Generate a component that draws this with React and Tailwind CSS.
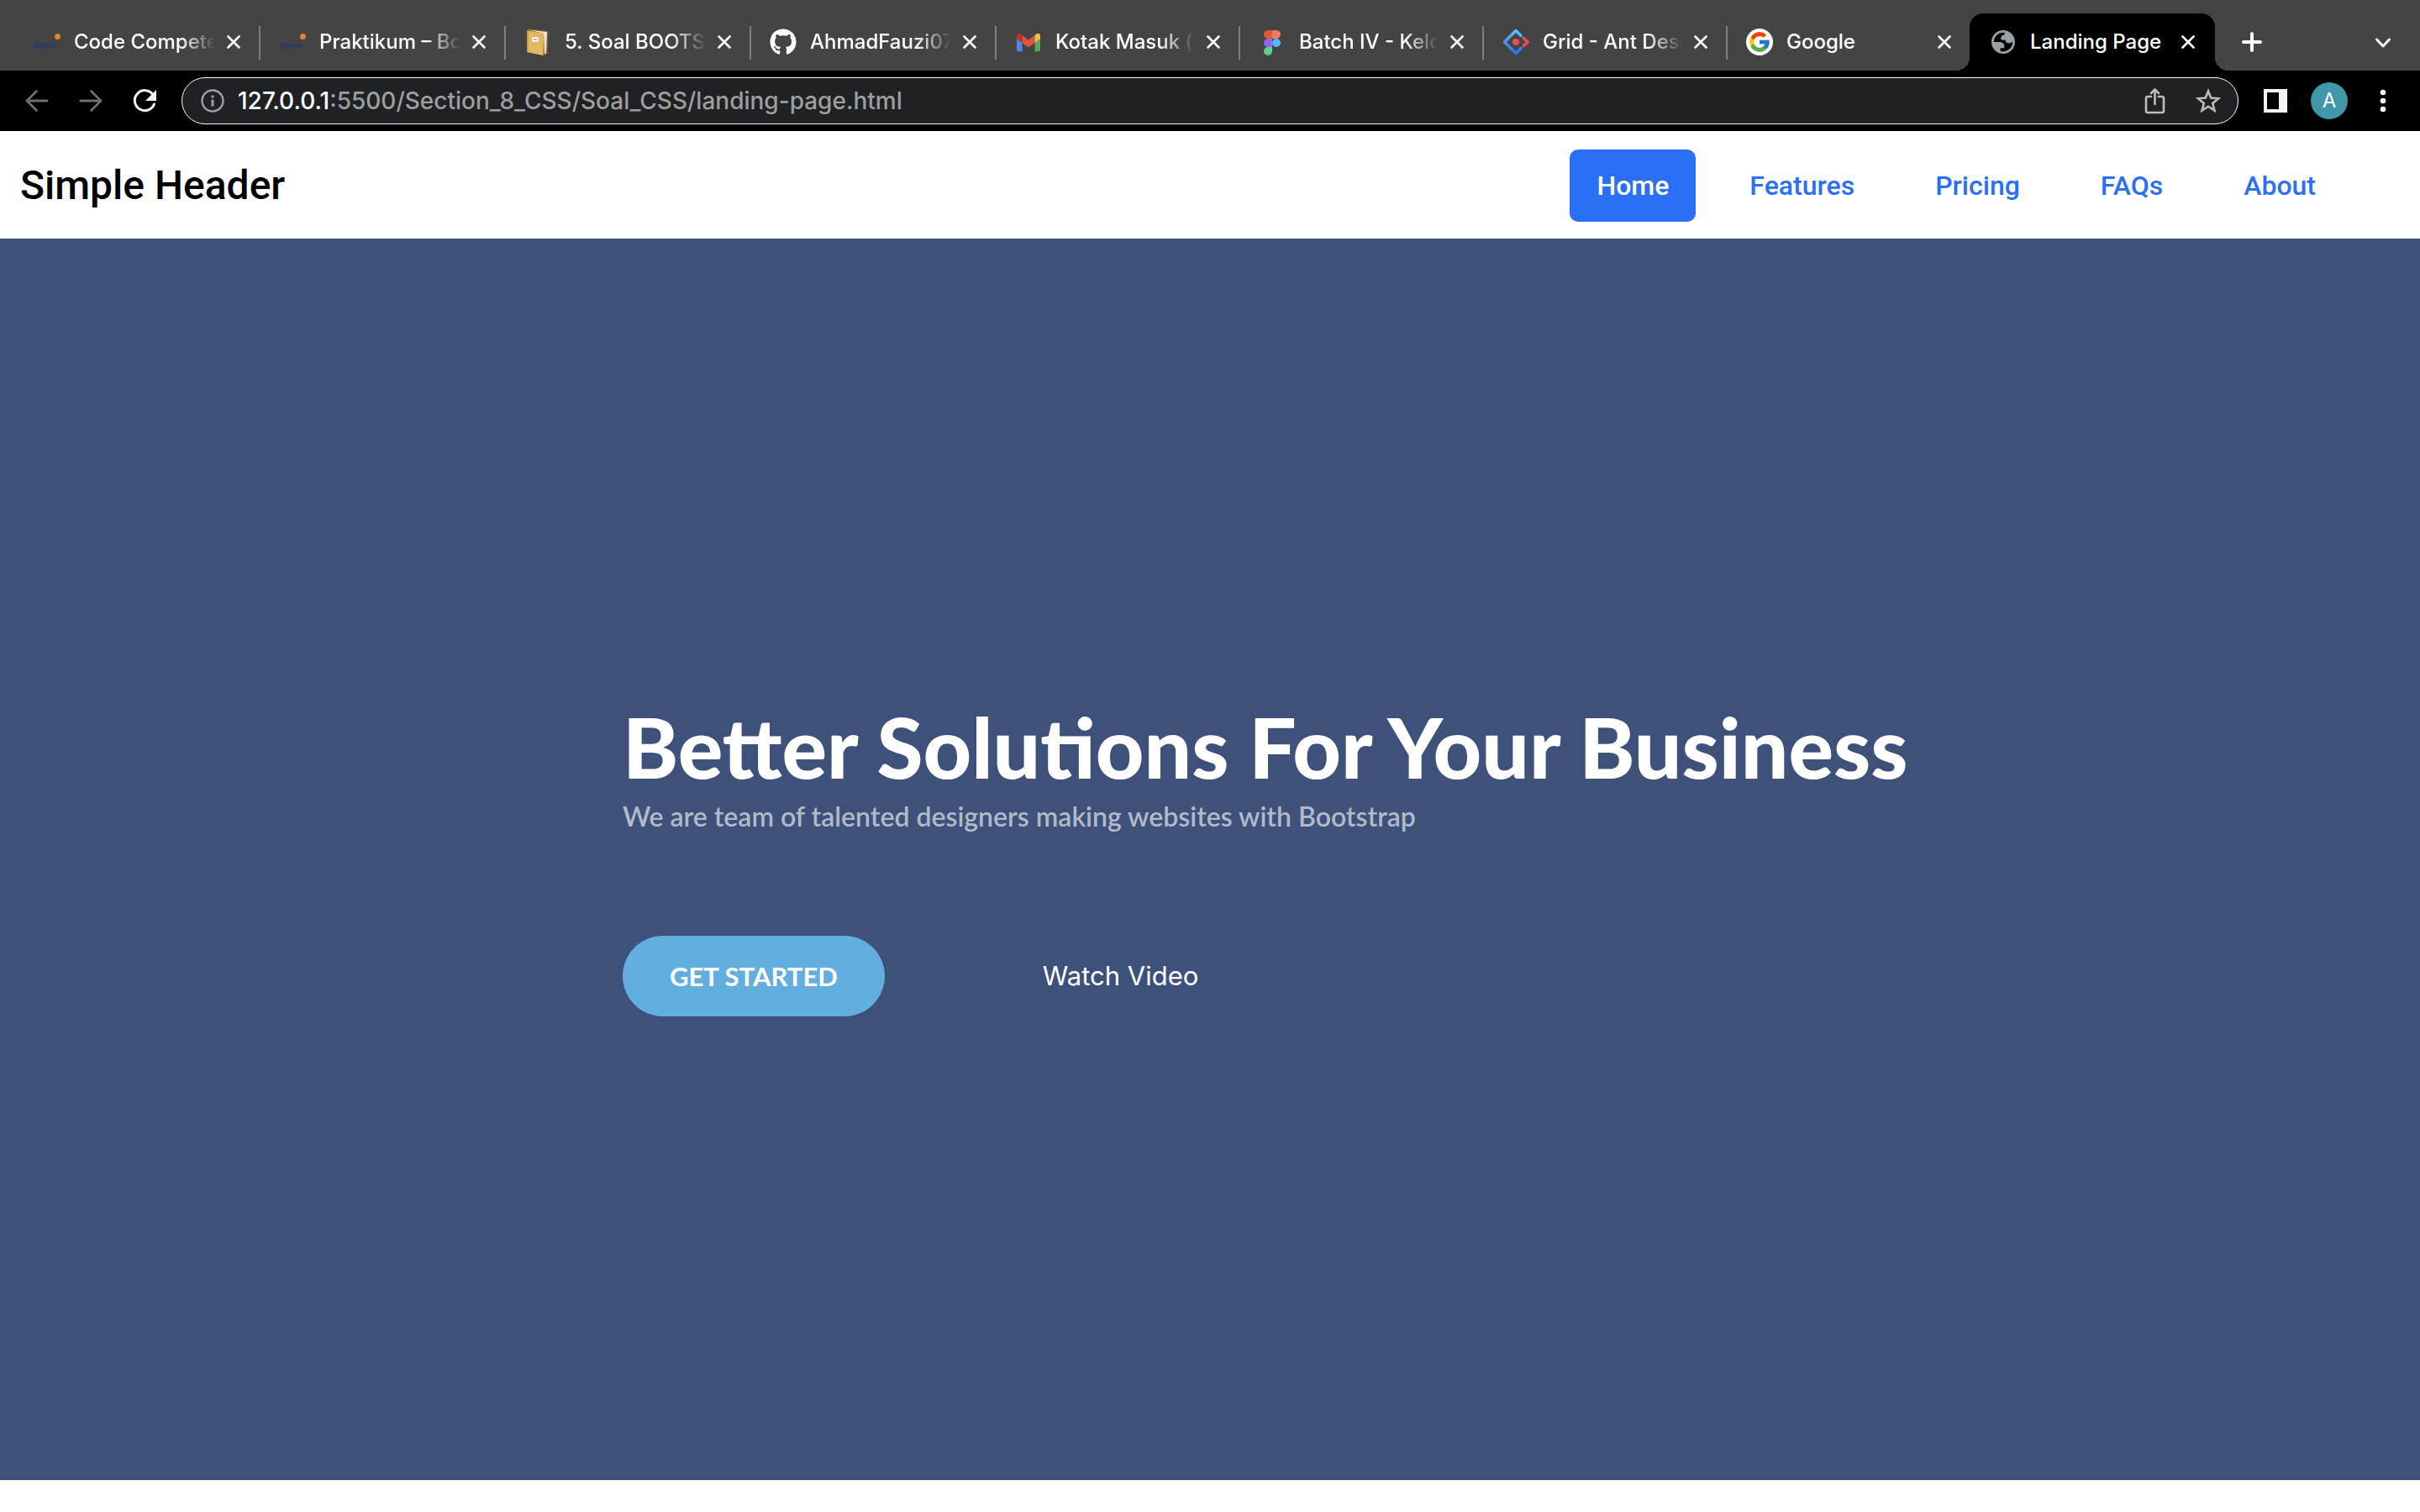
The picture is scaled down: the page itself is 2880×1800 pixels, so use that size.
import { FaGithub } from "react-icons/fa";
import { FcGoogle } from "react-icons/fc";

function AlterraIcon() {
  return (
    <span className="relative flex size-8 flex-col justify-center pt-3" aria-hidden="true">
      <span className="font-['Inter'] text-[8px] leading-2 font-black text-[#263a66]">alterra</span>
      <span className="font-['Inter'] text-[5px] leading-1 text-[#34425f]">academy</span>
      <span className="absolute top-1.5 right-0 size-[7px] rounded-full bg-[#e97e36]" />
    </span>
  );
}

function BookIcon() {
  return (
    <svg viewBox="0 0 32 32" className="size-8" aria-hidden="true">
      <path d="M3 2 L5 0.500 L28.500 3 L27.500 30 L23 32 L3 28Z" fill="#8a6526" />
      <path d="M5 1.500 L27 4 L26 29 L24 30.500 L23 6Z" fill="#e4e2dc" />
      <path d="M3 2.500 L23 5.500 L22.500 32 L3 28Z" fill="#e3b95f" />
      <path d="M3 2.500 L5 3 V28.500 L3 28Z" fill="#c99a3f" />
      <rect x="9" y="10" width="8" height="6" rx="2" fill="#f7f4ea" />
      <path d="M11 13h4" stroke="#777" />
    </svg>
  );
}

function GithubIcon() {
  return <FaGithub className="size-8 text-white" aria-hidden="true" />;
}

function GmailIcon() {
  return (
    <svg viewBox="0 0 32 32" className="size-8" aria-hidden="true">
      <path d="M2 12v13.5a1.8 1.8 0 0 0 1.8 1.8H8.5V16Z" fill="#4f87ed" />
      <path d="M30 12v13.5a1.8 1.8 0 0 1-1.8 1.8H23.5V16Z" fill="#57a65b" />
      <path d="M8.500 8v9L16 22.500 23.500 17V8L16 13.500Z" fill="#df5341" />
      <path d="M2 8.500v3.700L8.500 17V8L6.500 6.300C4.700 5 2 6.200 2 8.500Z" fill="#b93225" />
      <path d="M30 8.500v3.700L23.500 17V8l2-1.700C27.300 5 30 6.200 30 8.500Z" fill="#f4bd42" />
    </svg>
  );
}

function FigmaIcon() {
  return (
    <svg viewBox="0 0 32 32" className="size-8" aria-hidden="true">
      <path d="M16 2h-5a5 5 0 0 0 0 10h5Z" fill="#e25a33" />
      <path d="M16 2h5a5 5 0 0 1 0 10h-5Z" fill="#ee7b6b" />
      <path d="M16 12h-5a5 5 0 0 0 0 10h5Z" fill="#9762f6" />
      <circle cx="21" cy="17" r="5" fill="#54b9f8" />
      <path d="M16 22h-5a5 5 0 1 0 5 5Z" fill="#62d088" />
    </svg>
  );
}

function AntIcon() {
  return (
    <svg viewBox="0 0 32 32" className="size-8" aria-hidden="true">
      <defs>
        <linearGradient id="ant-blue" x1="0" y1="0" x2="0" y2="1">
          <stop offset="0" stopColor="#5cc0f5" />
          <stop offset="1" stopColor="#2b6cf6" />
        </linearGradient>
      </defs>
      <path d="M22 8.500 16 2.500 2.500 16 16 29.500 22 23.500" fill="none" stroke="url(#ant-blue)" strokeWidth="3.600" strokeLinejoin="round" strokeLinecap="round" />
      <path d="M25.500 11.500 30 16 25.500 20.500" fill="none" stroke="#e94d55" strokeWidth="3.600" strokeLinejoin="round" strokeLinecap="round" />
      <circle cx="16" cy="16" r="4" fill="#e94d55" />
    </svg>
  );
}

function GoogleIcon() {
  return (
    <span className="flex size-8 items-center justify-center rounded-full bg-white">
      <FcGoogle className="size-7" aria-hidden="true" />
    </span>
  );
}

function GlobeIcon() {
  return (
    <svg viewBox="0.570 0.570 22.860 22.860" className="size-8" aria-hidden="true">
      <path
        fillRule="evenodd"
        fill="#9aa0a6"
        d="M12 2C6.480 2 2 6.480 2 12s4.480 10 10 10 10-4.480 10-10S17.520 2 12 2zM4 12h4.400c3.407.022 4.922 1.730 4.543 5.127H9.488v2.470a8.004 8.004 0 0 0 10.498-8.083C19.327 12.504 18.332 13 17 13c-2.137 0-3.206-.916-3.206-2.750h-3.748c-.274-2.728.683-4.092 2.870-4.092 0-.975.327-1.597.811-1.970A8.004 8.004 0 0 0 4 12z"
      />
    </svg>
  );
}

function CloseIcon() {
  return (
    <svg viewBox="0 0 16 16" className="size-4" fill="none" stroke="#fff" strokeWidth="2.600" strokeLinecap="round" aria-hidden="true">
      <path d="M1.500 1.500l13 13M14.500 1.500l-13 13" />
    </svg>
  );
}

const tabs = [
  { title: "Code Compete", Icon: AlterraIcon, width: "w-[292px]", fade: true },
  { title: "Praktikum – Bo", Icon: AlterraIcon, width: "w-[292px]", fade: true },
  { title: "5. Soal BOOTS", Icon: BookIcon, width: "w-[292px]", fade: true },
  { title: "AhmadFauzi07", Icon: GithubIcon, width: "w-[292px]", fade: true },
  { title: "Kotak Masuk (", Icon: GmailIcon, width: "w-[290px]", fade: true },
  { title: "Batch IV - Kelo", Icon: FigmaIcon, width: "w-[290px]", fade: true },
  { title: "Grid - Ant Desi", Icon: AntIcon, width: "w-[290px]", fade: true },
  { title: "Google", Icon: GoogleIcon, width: "w-[288px]", last: true },
  { title: "Landing Page", Icon: GlobeIcon, width: "w-[292px]", active: true },
];

function Tab({ title, Icon, width, fade, active, last }) {
  return (
    <div
      className={`relative flex h-[68px] items-center gap-3.5 ${width} ${
        active ? "rounded-t-2xl bg-black pl-6" : "pl-[22px]"
      } ${last ? "pr-[22px]" : "pr-6"}`}
    >
      <button type="button" className="flex min-w-0 flex-1 items-center gap-4 text-left">
        <span className="shrink-0">
          <Icon />
        </span>
        <span
          className={`min-w-0 flex-1 overflow-hidden text-2xl font-medium whitespace-nowrap text-white ${
            fade ? "mask-r-from-75%" : ""
          }`}
        >
          {title}
        </span>
      </button>
      <button type="button" aria-label={`Close ${title}`} className="shrink-0">
        <CloseIcon />
      </button>
      {!active && !last && <span className="absolute top-[15px] right-0 h-10 w-0.5 bg-[#808080]" />}
      {active && (
        <>
          <span className="absolute bottom-0 -left-4 size-4 bg-[radial-gradient(circle_at_0_0,transparent_16px,#000_16px)]" />
          <span className="absolute -right-4 bottom-0 size-4 bg-[radial-gradient(circle_at_100%_0,transparent_16px,#000_16px)]" />
        </>
      )}
    </div>
  );
}

function TabStrip() {
  return (
    <div className="flex h-[84px] items-end bg-[#444] pl-[18px]">
      {tabs.map((tab) => (
        <Tab key={tab.title} {...tab} />
      ))}
      <button type="button" aria-label="New tab" className="mb-[22px] ml-8">
        <svg viewBox="0 0 24 24" className="size-6" fill="none" stroke="#fff" strokeWidth="4" strokeLinecap="round">
          <path d="M12 2v20M2 12h20" />
        </svg>
      </button>
      <button type="button" aria-label="Search tabs" className="mr-8 mb-[22px] ml-auto">
        <svg viewBox="0 0 24 24" className="size-6" fill="none" stroke="#fff" strokeWidth="3" strokeLinecap="round" strokeLinejoin="round">
          <path d="M4.500 9l7.500 8 7.500-8" />
        </svg>
      </button>
    </div>
  );
}

function Toolbar() {
  return (
    <div className="flex h-[72px] items-center bg-black pl-7">
      <button type="button" aria-label="Back">
        <svg viewBox="0 0 32 32" className="size-8" fill="none" stroke="#6e6e6e" strokeWidth="2.800" strokeLinecap="round" strokeLinejoin="round">
          <path d="M28 16H4M15.500 4.500 4 16l11.500 11.500" />
        </svg>
      </button>
      <button type="button" aria-label="Forward" className="ml-8">
        <svg viewBox="0 0 32 32" className="size-8" fill="none" stroke="#6e6e6e" strokeWidth="2.800" strokeLinecap="round" strokeLinejoin="round">
          <path d="M4 16h24M16.500 4.500 28 16 16.500 27.500" />
        </svg>
      </button>
      <button type="button" aria-label="Reload" className="ml-8">
        <svg viewBox="0 0 32 32" className="size-8">
          <path d="M26 8.500A12 12 0 1 0 27.500 20" fill="none" stroke="#f1f3f4" strokeWidth="3" strokeLinecap="round" />
          <path d="M30 3v13H17Z" fill="#f1f3f4" />
        </svg>
      </button>
      <div className="ml-7 flex h-14 flex-1 items-center rounded-full border border-white bg-[#202124] pr-[18px] pl-[22px]">
        <svg viewBox="0 0 28 28" className="size-7 shrink-0" fill="none" stroke="#9aa0a6" aria-hidden="true">
          <circle cx="14" cy="14" r="12.500" strokeWidth="2.400" />
          <path d="M14 12.500v8M14 7.500v3" strokeWidth="3" />
        </svg>
        <div className="ml-4 flex-1 text-[28px] font-medium text-[#9e9e9e]">
          <span className="text-white">127.0.0.1</span>:5500/Section_8_CSS/Soal_CSS/landing-page.html
        </div>
        <button type="button" aria-label="Share this page">
          <svg viewBox="0 0 32 32" className="size-8" fill="none" stroke="#bdbdbd" strokeWidth="2.600" strokeLinecap="round" strokeLinejoin="round">
            <path d="M11 11H7a2 2 0 0 0-2 2V28a2 2 0 0 0 2 2h17a2 2 0 0 0 2-2V13a2 2 0 0 0-2-2h-4M15.500 20V3M11 7 15.500 2.500 20 7" />
          </svg>
        </button>
        <button type="button" aria-label="Bookmark this tab" className="ml-8">
          <svg viewBox="0 0 32 32" className="size-8" fill="none" stroke="#bdbdbd" strokeWidth="2.600">
            <path d="M15 4.500l3.200 8.100 8.900.7-6.900 5.600 2.300 8.600L15 22.700l-7.500 4.800 2.300-8.600-6.900-5.600 8.900-.7Z" />
          </svg>
        </button>
      </div>
      <button type="button" aria-label="Side panel" className="ml-[30px]">
        <svg viewBox="0 0 28 28" className="size-7">
          <path d="M0 0h28v28H0ZM4 4v20h14V4Z" fill="#f1f3f4" fillRule="evenodd" />
        </svg>
      </button>
      <button type="button" aria-label="Profile" className="ml-7 size-11 rounded-full bg-[#3f97a8] text-2xl text-white">
        A
      </button>
      <button type="button" aria-label="Menu" className="mr-7 ml-[26px]">
        <svg viewBox="0 0 32 32" className="size-8" fill="#f1f3f4">
          <circle cx="16" cy="6" r="3.300" />
          <circle cx="16" cy="16" r="3.300" />
          <circle cx="16" cy="26" r="3.300" />
        </svg>
      </button>
    </div>
  );
}

const links = ["Home", "Features", "Pricing", "FAQs", "About"];

function SiteHeader() {
  return (
    <header className="flex h-32 items-center justify-between bg-white pt-0.5 pr-[92px] pl-6 font-['Roboto',sans-serif] font-medium">
      <a href="#top" className="text-5xl text-black">
        Simple Header
      </a>
      <nav className="flex gap-8 text-[32px]">
        {links.map((link) => (
          <a
            key={link}
            href={`#${link.toLowerCase()}`}
            className={`flex h-[86px] items-center rounded-[10px] px-8 ${
              link === "Home" ? "bg-[#2970f6] text-white" : "text-[#2970f6]"
            }`}
          >
            {link}
          </a>
        ))}
      </nav>
    </header>
  );
}

function Hero() {
  return (
    <main className="flex flex-1 flex-col justify-center bg-[#3e517a] pb-3.5 pl-[25.73%] font-['Lato',sans-serif]">
      <h1 className="text-[100px] leading-[132px] font-black text-white">Better Solutions For Your Business</h1>
      <p className="text-[32px] leading-9 font-semibold text-[#b1b9ca]">
        We are team of talented designers making websites with Bootstrap
      </p>
      <div className="mt-[124px] flex items-center">
        <button type="button" className="h-24 rounded-full bg-[#62afdf] px-14 text-[31px] font-bold text-white">
          GET STARTED
        </button>
        <a href="#video" className="ml-[188px] font-['Inter',sans-serif] text-[31px] text-white">
          Watch Video
        </a>
      </div>
    </main>
  );
}

export default function App() {
  return (
    <div className="flex min-h-screen flex-col bg-white pb-[38px] font-['Inter',sans-serif]">
      <TabStrip />
      <Toolbar />
      <SiteHeader />
      <Hero />
    </div>
  );
}
